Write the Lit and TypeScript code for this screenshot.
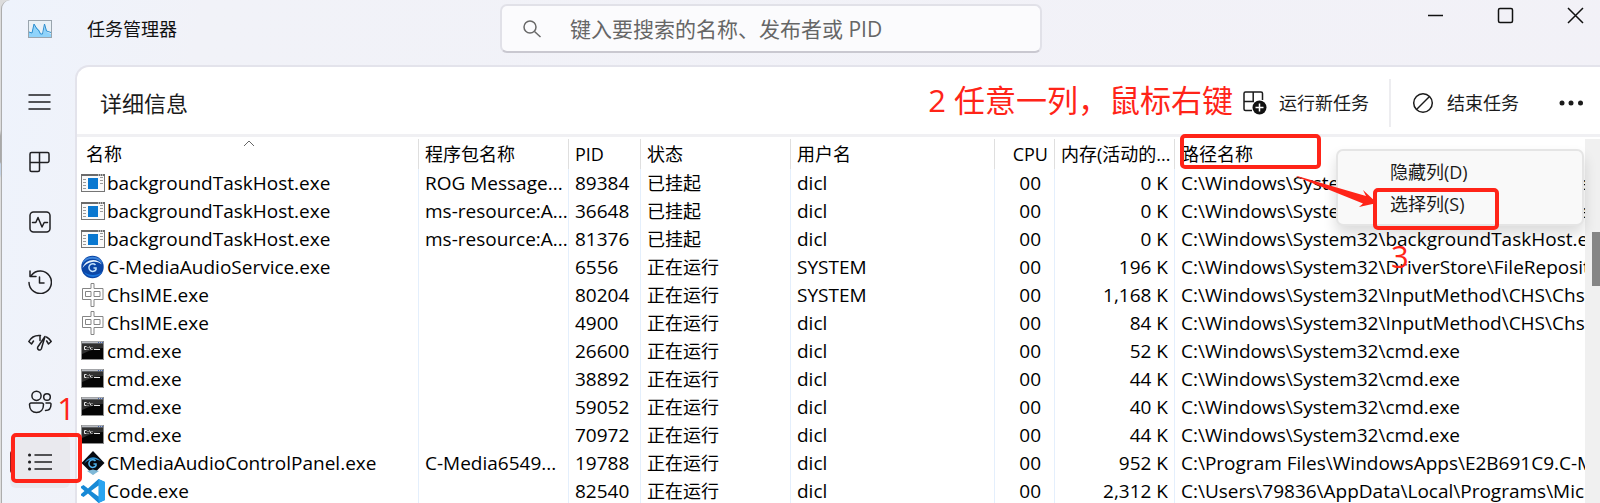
import { LitElement, html, css, svg } from "lit";
import { customElement, property, state } from "lit/decorators.js";
import { classMap } from "lit/directives/class-map.js";

interface Proc {
  icon: string;
  name: string;
  pkg: string;
  pid: string;
  status: string;
  user: string;
  mem: string;
  path: string;
}

const SYS = "C:\\Windows\\System32\\";
const RUN = "正在运行";
const HOLD = "已挂起";
const p = (icon: string, name: string, pkg: string, pid: string, status: string, user: string, mem: string, path: string): Proc =>
  ({ icon, name, pkg, pid, status, user, mem, path });

const PROCS: Proc[] = [
  p("host", "backgroundTaskHost.exe", "ROG Message...", "89384", HOLD, "dicl", "0 K", SYS + "backgroundTaskHost.exe"),
  p("host", "backgroundTaskHost.exe", "ms-resource:A...", "36648", HOLD, "dicl", "0 K", SYS + "backgroundTaskHost.exe"),
  p("host", "backgroundTaskHost.exe", "ms-resource:A...", "81376", HOLD, "dicl", "0 K", SYS + "backgroundTaskHost.exe"),
  p("audio", "C-MediaAudioService.exe", "", "6556", RUN, "SYSTEM", "196 K", SYS + "DriverStore\\FileRepository"),
  p("ime", "ChsIME.exe", "", "80204", RUN, "SYSTEM", "1,168 K", SYS + "InputMethod\\CHS\\ChsIME.exe"),
  p("ime", "ChsIME.exe", "", "4900", RUN, "dicl", "84 K", SYS + "InputMethod\\CHS\\ChsIME.exe"),
  p("cmd", "cmd.exe", "", "26600", RUN, "dicl", "52 K", SYS + "cmd.exe"),
  p("cmd", "cmd.exe", "", "38892", RUN, "dicl", "44 K", SYS + "cmd.exe"),
  p("cmd", "cmd.exe", "", "59052", RUN, "dicl", "40 K", SYS + "cmd.exe"),
  p("cmd", "cmd.exe", "", "70972", RUN, "dicl", "44 K", SYS + "cmd.exe"),
  p("panel", "CMediaAudioControlPanel.exe", "C-Media6549...", "19788", RUN, "dicl", "952 K", "C:\\Program Files\\WindowsApps\\E2B691C9.C-Media"),
  p("code", "Code.exe", "", "82540", RUN, "dicl", "2,312 K", "C:\\Users\\79836\\AppData\\Local\\Programs\\Microsoft"),
];

const PROC_ICONS: Record<string, unknown> = {
  host: svg`
    <rect x="0.5" y="3.5" width="23" height="17" fill="#fafafa" stroke="#757575"/>
    <path d="M0 4h24" stroke="#6b6b6b" stroke-width="2"/>
    <path d="M17 4h1m1 0h1m1 0h1" stroke="#fff" stroke-width="1"/>
    <path d="M2 8.500h3M2 11.500h3M2 14.500h3M2 17.500h3M19 6.500h3M19 9.500h3M19 12.500h3" stroke="#9a9a9a"/>
    <path d="M7 7h10v11H7z" fill="#0a78d0"/>`,
  audio: svg`
    <circle cx="11.500" cy="12" r="11.200" fill="#0b46a6"/>
    <path d="M1 9a11.200 11.200 0 0 1 21 0c-6-7-15-7-21 0z" fill="#3f86dc"/>
    <path d="M1.500 13C4 4 16 2 21 9.500c-4-3-7-3-10-2.500-4 .5-7 2.500-9.500 6z" fill="#e6f1fb"/>
    <path d="M14.500 10a3.800 3.800 0 1 0 .5 4.500V13h-2.500" fill="none" stroke="#c4e2fb" stroke-width="1.500"/>
    <path d="M3 17c3 6 14 7 18 0-5 4-13 4-18 0z" fill="#1a74dd"/>`,
  ime: svg`
    <path d="M1.500 5.500h8.500v-5h3v5h9v11h-9v7h-3v-7H1.500z" fill="#fff" stroke="#858585"/>
    <path d="M4.500 8.500H10v5H4.500zM13 8.500h6v5h-6z" fill="#fff" stroke="#858585"/>`,
  cmd: svg`
    <rect x="0.500" y="2.500" width="22" height="18" fill="#050505" stroke="#8d8d8d"/>
    <path d="M1 3.500h21" stroke="#b9bcc2" stroke-width="2"/>
    <path d="M17 3.500h1m1 0h1m1 0h1" stroke="#4566b0"/>
    <path d="M1 5h21v4C14 9 8 12 1 15z" fill="#303030"/>
    <path d="M5.500 7.500h-2v3h2M7 8v.8M7 10v.8M8.500 7.500l1.500 3M11 8v.8M11 10v.8M13 10.500h6" fill="none" stroke="#e8e8e8"/>`,
  panel: svg`
    <path d="M12 0l11.500 12L12 23.500.500 12z" fill="#070b12"/>
    <path d="M6 20l6-1.500 6 1.500-6 4z" fill="#7fb9d8"/>
    <path d="M3 13C7 5 14 4 20 10c-5-2-7-2-9-1.500-4 .5-6 2-8 4.500z" fill="#2e94d6"/>
    <path d="M14.500 10a3.800 3.800 0 1 0 .5 4.500V13h-2.500" fill="none" stroke="#4fb4ee" stroke-width="1.500"/>`,
  code: svg`
    <path d="M17.500 0L24 3v18l-6.500 3L7 14.500 2.500 18 0 16.500v-9L2.500 6 7 9.500z" fill="#1789d6"/>
    <path d="M17.500 0L24 3v18l-6.500 3z" fill="#2ba4f0"/>
    <path d="M17.500 6.500v11L10 12zM0 9l3.500 3L0 15z" fill="#fff"/>`,
};

const NAV: { id: string; label: string; glyph: unknown }[] = [
  { id: "menu", label: "打开导航", glyph: svg`<path d="M1 5h21M1 12h21M1 19h21"/>` },
  { id: "processes", label: "进程", glyph: svg`<path d="M3.500 2.500h16a1.500 1.500 0 0 1 1.500 1.500v7a1.500 1.500 0 0 1-1.500 1.500h-8V20a1.500 1.500 0 0 1-1.500 1.500H3.500A1.500 1.500 0 0 1 2 20V4a1.500 1.500 0 0 1 1.500-1.500zM11.500 2.500v10H2"/>` },
  { id: "performance", label: "性能", glyph: svg`<rect x="2" y="2" width="20" height="20" rx="3.500"/><path d="M4.500 12.500h3.300l2.200-5 4 9.500 2.200-4.500h3.300"/>` },
  { id: "history", label: "应用历史记录", glyph: svg`<path d="M1 12.500A11.200 11.200 0 1 0 3.500 5.200M2 1v5.500H8M11.500 7v6h4.500"/>` },
  { id: "startup", label: "启动应用", glyph: svg`<path d="M3.500 14L.8 11.500C3 7.500 7.500 5 12.500 5.500M3.500 14l2-3M12 5.500v5M18.500 7c2 1 3.500 2.500 4.700 4.500L20.500 14l-1.800-3M17 6.500L9.800 17a2 2 0 1 0 3.500 2z"/>` },
  { id: "users", label: "用户", glyph: svg`<circle cx="8.500" cy="5.800" r="4.600"/><circle cx="19" cy="7" r="3.300"/><path d="M3 13h11a1.500 1.500 0 0 1 1.500 1.500c0 5-3 8-7 8s-7-3-7-8A1.500 1.500 0 0 1 3 13zM18 13h4a1 1 0 0 1 1 1.200c0 4-2 6.300-5.500 6.300"/>` },
  { id: "details", label: "详细信息", glyph: svg`<path d="M7 5h17M7 12h17M7 19h17"/><path d="M1.500 5h.1M1.500 12h.1M1.500 19h.1" stroke-width="3"/>` },
];

@customElement("nav-rail")
class NavRail extends LitElement {
  @property() active = "details";

  static styles = css`
    :host { display: block; position: relative; z-index: 1; }
    nav { display: flex; flex-direction: column; gap: 8px; padding: 11px 5px 0 8px; }
    .item {
      position: relative; display: flex; align-items: center; justify-content: center;
      height: 52px; padding: 0; border: 0; border-radius: 6px; background: none; color: #1f1f22; font: inherit;
    }
    .item.active { background: #e9e9ee; }
    .item.active::before {
      content: ""; position: absolute; left: 0; top: 15px; width: 4px; height: 22px;
      border-radius: 2px; background: #8c1f1f;
    }
    svg { width: 24px; height: 24px; fill: none; stroke: currentColor; stroke-width: 1.500; stroke-linejoin: round; stroke-linecap: round; }
    .mark { position: absolute; left: 1px; top: -3px; right: -12px; bottom: 5px; border: 4px solid #ff2418; border-radius: 5px; }
    .step { position: absolute; right: -5px; top: -50px; font-size: 31px; line-height: 44px; color: #ff2418; }
  `;

  render() {
    return html`<nav>
      ${NAV.map((n) => html`
        <button class=${classMap({ item: true, active: n.id === this.active })} aria-label=${n.label}>
          <svg viewBox="0 0 24 24">${n.glyph}</svg>
          ${n.id === this.active ? html`<span class="mark"></span><span class="step">1</span>` : ""}
        </button>`)}
    </nav>`;
  }
}

@customElement("process-table")
class ProcessTable extends LitElement {
  @property({ attribute: false }) rows: Proc[] = [];

  static styles = css`
    :host { display: flex; min-height: 0; padding-top: 2px; }
    .view { flex: 1; min-width: 0; }
    table { width: 100%; table-layout: fixed; border-collapse: separate; border-spacing: 0; font-size: 18px; color: #000; }
    .name { width: 342px; }
    .pkg, .status { width: 150px; }
    .pid { width: 72px; }
    .user { width: 204px; }
    .cpu { width: 60px; }
    .mem { width: 120px; }
    th, td { box-sizing: border-box; padding: 0 6px; border-right: 1px solid #e4effc; white-space: nowrap; text-align: left; font-weight: 400; }
    th { position: relative; height: 30px; line-height: 30px; border-right-color: #dfdfdf; }
    th:first-child { padding-left: 9px; }
    td { height: 28px; line-height: 28px; overflow: hidden; }
    th:last-child, td:last-child { border-right: 0; padding-right: 0; }
    td:first-child { padding-left: 4px; }
    th.num, td.num { text-align: right; }
    td.load { padding-right: 13px; }
    .cell { display: flex; align-items: center; gap: 2px; height: 28px; }
    .cell svg { width: 24px; height: 24px; flex: none; }
    .sort { position: absolute; left: 50%; top: 0; width: 12px; height: 8px; margin-left: -5px; fill: none; stroke: #666; }
    .mark { position: absolute; left: 5px; top: -5px; width: 141px; height: 35px; box-sizing: border-box; border: 4px solid #ff2418; border-radius: 5px; }
    .bar { flex: none; width: 15px; display: flex; flex-direction: column; align-items: flex-end; padding-top: 93px; box-sizing: border-box; background: #f0f0f0; }
    .thumb { width: 8px; height: 54px; background: #858585; }
    .latin { font-size: 19px; }
  `;

  render() {
    return html`
      <div class="view">
        <table>
          <colgroup>
            <col class="name"><col class="pkg"><col class="pid"><col class="status"><col class="user"><col class="cpu"><col class="mem"><col>
          </colgroup>
          <thead>
            <tr>
              <th>名称<svg class="sort" viewBox="0 0 12 8"><path d="M1 7l5-5 5 5"/></svg></th>
              <th>程序包名称</th>
              <th>PID</th>
              <th>状态</th>
              <th>用户名</th>
              <th class="num">CPU</th>
              <th class="num">内存(活动的...</th>
              <th>路径名称<span class="mark"></span></th>
            </tr>
          </thead>
          <tbody>
            ${this.rows.map((r) => html`
              <tr>
                <td class="latin"><div class="cell"><svg viewBox="0 0 24 24">${PROC_ICONS[r.icon]}</svg>${r.name}</div></td>
                <td class="latin">${r.pkg}</td>
                <td class="latin">${r.pid}</td>
                <td>${r.status}</td>
                <td class="latin">${r.user}</td>
                <td class="latin num load">00</td>
                <td class="latin num">${r.mem}</td>
                <td class="latin">${r.path}</td>
              </tr>`)}
          </tbody>
        </table>
      </div>
      <div class="bar"><div class="thumb"></div></div>`;
  }
}

@customElement("column-menu")
class ColumnMenu extends LitElement {
  static styles = css`
    :host { display: block; }
    .menu {
      position: relative; box-sizing: border-box; width: 248px; height: 77px; padding: 5px 0;
      border: 2px solid #e5e5e5; border-radius: 7px; background: #f9f9f9;
      box-shadow: 0 8px 14px rgba(0, 0, 0, 0.14);
    }
    button {
      position: relative; display: block; width: 100%; height: 32px; padding: 0 0 0 52px; border: 0; background: none;
      text-align: left; font: inherit; font-size: 18px; line-height: 32px; color: #1b1b1b;
    }
    .mark { position: absolute; left: 35px; top: 0; width: 126px; height: 42px; box-sizing: border-box; border: 4px solid #ff2418; border-radius: 5px; }
    .arrow { position: absolute; left: -42px; top: 24px; width: 86px; height: 36px; overflow: visible; fill: #ff2418; }
    .step { position: absolute; left: 53px; top: 83px; font-size: 31px; line-height: 44px; color: #ff2418; }
  `;

  render() {
    return html`
      <div class="menu" role="menu">
        <button role="menuitem">隐藏列(D)</button>
        <button role="menuitem">选择列(S)<span class="mark"></span></button>
        <svg class="arrow" viewBox="0 0 86 36"><path d="M0 1.500L2 1.200 70 21 67 15 81 28 63 32 67 28.500z"/></svg>
        <span class="step">3</span>
      </div>`;
  }
}

@customElement("app-root")
class AppRoot extends LitElement {
  @state() private rows = PROCS;

  static styles = css`
    :host {
      display: flex; height: 100vh; overflow: hidden;
      font-family: "Open Sans", "Noto Sans CJK SC", sans-serif;
      background: linear-gradient(#dcdcdc 0 130px, #a9a9a9 136px 162px, #c3d3e6 164px 174px, #dedede 178px);
    }
    .window {
      flex: 1; min-width: 0; display: grid; grid-template: 65px 1fr / 73px 1fr; margin-left: 1px;
      border-left: 1px solid #adadad; border-radius: 9px 0 0 0;
      background: linear-gradient(100deg, #eef3fc, #f1f2f8 12%, #f2f1f7);
    }
    .title { grid-column: 1 / -1; display: grid; grid-template-columns: 498fr 542px 558fr; }
    .brand { display: flex; align-items: center; gap: 35px; padding: 0 0 7px 26px; font-size: 18px; line-height: 26px; color: #111; }
    .brand svg { width: 24px; height: 18px; }
    .search {
      box-sizing: border-box; display: flex; align-items: center; gap: 28px; height: 49px; margin-top: 4px; padding: 0 20px;
      border: 2px solid #e1e1e8; border-bottom-color: #c9c8d0; border-radius: 7px; background: #fbfbfd;
    }
    .search svg { width: 20px; height: 20px; flex: none; fill: none; stroke: #686868; stroke-width: 1.500; }
    .search input {
      flex: 1; min-width: 0; height: 32px; padding: 0; border: 0; outline: 0; background: none;
      font: inherit; font-size: 21px; line-height: 32px; color: #111;
    }
    .search input::placeholder { color: #666; opacity: 1; }
    .controls { display: flex; justify-content: flex-end; gap: 53px; padding: 7px 16px 0 0; }
    .controls button { width: 17px; height: 17px; padding: 0; border: 0; background: none; }
    .controls svg { display: block; width: 17px; height: 17px; fill: none; stroke: #111; stroke-width: 1.500; }
    .panel {
      position: relative; min-width: 0; min-height: 0; display: flex; flex-direction: column;
      border: 2px solid #e3e3eb; border-width: 2px 0 0 2px; border-radius: 14px 0 0 0; background: #fff;
    }
    .toolbar {
      flex: none; box-sizing: border-box; display: flex; align-items: center; height: 70px; padding: 4px 16px 0 23px;
      border-bottom: 3px solid #f0f0f3; border-radius: 12px 0 0 0;
    }
    h1 { flex: 1; margin: 0; font-size: 22px; line-height: 32px; font-weight: 400; color: #1b1b1b; }
    .note { margin-right: 10px; padding-bottom: 6px; font-size: 31px; line-height: 44px; color: #ff2418; white-space: nowrap; }
    .action {
      display: flex; align-items: center; gap: 12px; padding: 0; border: 0; background: none;
      font: inherit; font-size: 18px; line-height: 28px; color: #1b1b1b; white-space: nowrap;
    }
    .action svg { width: 24px; height: 24px; fill: none; stroke: #1b1b1b; stroke-width: 1.500; }
    .rule { width: 2px; height: 48px; margin: 0 20px; background: #ededf0; }
    .more { margin-left: 39px; }
    .more svg { width: 26px; fill: #1b1b1b; stroke: none; }
    process-table { flex: 1; }
    column-menu { position: absolute; right: 16px; top: 82px; }
  `;

  render() {
    return html`
      <div class="window">
        <header class="title">
          <div class="brand">
            <svg viewBox="0 0 24 18">
              <rect x="0.500" y="0.500" width="23" height="17" fill="#e9f1f6" stroke="#9aa5ae"/>
              <path d="M1 12l3 1 2-9 3 4 2 2 2 4h2l2-9 2 7 4 2v3H1z" fill="#8fd3fa"/>
              <path d="M1 12l3 1 2-9 3 5 1.500 1 2 4h2L16.500 4 18.500 11l4.500 1.500" fill="none" stroke="#2c8fd0"/>
            </svg>
            <span>任务管理器</span>
          </div>
          <label class="search">
            <svg viewBox="0 0 20 20"><circle cx="8" cy="8" r="6"/><path d="M12.500 12.500l6 5.500"/></svg>
            <input type="text" aria-label="搜索" placeholder="键入要搜索的名称、发布者或 PID">
          </label>
          <div class="controls">
            <button aria-label="最小化"><svg viewBox="0 0 17 17"><path d="M1 8.500h15"/></svg></button>
            <button aria-label="最大化"><svg viewBox="0 0 17 17"><rect x="1.500" y="1.500" width="14" height="14" rx="1.500"/></svg></button>
            <button aria-label="关闭"><svg viewBox="0 0 17 17"><path d="M1 1l15 15M16 1L1 16"/></svg></button>
          </div>
        </header>
        <nav-rail active="details"></nav-rail>
        <main class="panel">
          <div class="toolbar">
            <h1>详细信息</h1>
            <span class="note">2 任意一列，鼠标右键</span>
            <button class="action">
              <svg viewBox="0 0 24 24">
                <path d="M9 19.500H2.500A1.500 1.500 0 0 1 1 18V2.500A1.500 1.500 0 0 1 2.500 1H18a1.500 1.500 0 0 1 1.500 1.500V9M10.200 1v9.500M1 10.500h10"/>
                <circle cx="16.500" cy="16.500" r="7" fill="#111" stroke="none"/>
                <path d="M16.500 12.500v8M12.500 16.500h8" stroke="#fff"/>
              </svg>
              运行新任务
            </button>
            <span class="rule"></span>
            <button class="action">
              <svg viewBox="0 0 24 24"><circle cx="12" cy="12" r="9.300"/><path d="M5.500 18.500l13-13"/></svg>
              结束任务
            </button>
            <button class="action more" aria-label="更多">
              <svg viewBox="0 0 26 24"><circle cx="4" cy="12" r="2.500"/><circle cx="13" cy="12" r="2.500"/><circle cx="22.500" cy="12" r="2.500"/></svg>
            </button>
          </div>
          <process-table .rows=${this.rows}></process-table>
          <column-menu></column-menu>
        </main>
      </div>`;
  }
}
